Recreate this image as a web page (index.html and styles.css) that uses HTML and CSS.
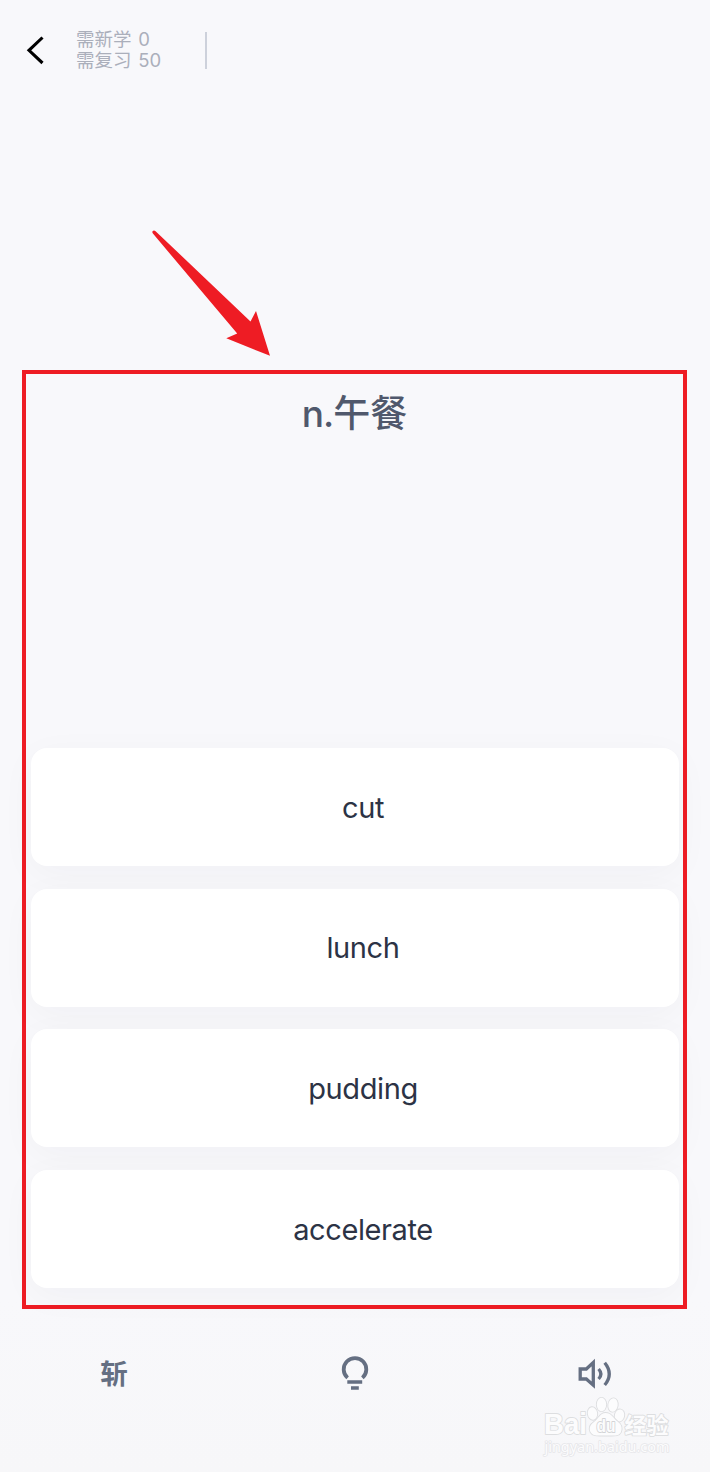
FILE: index.html
```html
<!DOCTYPE html>
<html lang="zh-CN">
<head>
<meta charset="utf-8">
<title>单词复习</title>
<link rel="stylesheet" href="styles.css">
</head>
<body>
<div class="screen">
  <header class="topbar">
    <svg class="back" width="20" height="32" viewBox="0 0 20 32"><path d="M16.5 3.5 L3 16.3 L16.5 29" fill="none" stroke="#000" stroke-width="3.1"/></svg>
    <div class="counts">
      <div>需新学 0</div>
      <div>需复习 50</div>
    </div>
    <div class="divider"></div>
  </header>
  <main class="quiz">
    <h1 class="meaning"><span class="pos">n.</span>午餐</h1>
    <div class="options">
      <div class="option">cut</div>
      <div class="option">lunch</div>
      <div class="option">pudding</div>
      <div class="option">accelerate</div>
    </div>
  </main>
  <nav class="tools">
    <div class="tool kill">斩</div>
    <div class="tool"><svg width="40" height="40" viewBox="0 0 40 40" fill="none" stroke="#656f82">
      <path d="M12.6 24.9 A11.3 11.3 0 1 1 27.4 24.9" stroke-width="3.8"/>
      <path d="M12.3 29H27.2M16 35H23.8" stroke-width="3.7"/></svg></div>
    <div class="tool"><svg width="40" height="40" viewBox="0 0 40 40" fill="none" stroke="#656f82" stroke-width="3.3">
      <path d="M5.2 16H11.3L18.3 9.6V32.2L11.3 26H5.2Z"/>
      <path d="M23.6 16 Q28.2 21 23.6 26M29.7 9.8 Q38.8 21 29.7 32"/></svg></div>
  </nav>
  <svg class="arrow" width="120" height="128" viewBox="0 0 120 128"><path d="M2.8 3 Q4 1.9 5.6 3.2 L100.5 93.4 L106 83 L120 127.8 L76.3 110.3 L87.2 105.4 L2.9 5.6 Q1.8 4 2.8 3Z" fill="#ee1c24"/></svg>
  <svg class="watermark" width="135" height="66" viewBox="0 0 135 66">
    <g fill="#fcfcfd" stroke="#dddee0" stroke-width="1.8" paint-order="stroke" stroke-linejoin="round">
      <text x="3" y="41" class="wm-main" textLength="43" lengthAdjust="spacingAndGlyphs">Bai</text>
      <ellipse cx="51.5" cy="20.5" rx="4.7" ry="6.3" transform="rotate(-8 51.5 20.5)"/>
      <ellipse cx="60.5" cy="11.5" rx="4.7" ry="6.7"/>
      <ellipse cx="72" cy="12" rx="4.7" ry="6.7" transform="rotate(8 72 12)"/>
      <ellipse cx="78.5" cy="22.5" rx="4.7" ry="6.1" transform="rotate(12 78.5 22.5)"/>
      <path d="M64.5 20 C59 20 57.5 26 53 29 C48.5 32 48 36 49.5 39 C52 43.5 57 42.5 64.5 42.5 C73 42.5 78 43.5 80 39 C81.5 35 80.5 31.5 76.5 28.5 C72 25 70.5 20 64.5 20Z"/>
      <text x="83.5" y="39.5" class="wm-cn">经验</text>
      <text x="3.5" y="58.5" class="wm-url" textLength="125" lengthAdjust="spacingAndGlyphs" stroke="#e6e6e9" stroke-width="1.5">jingyan.baidu.com</text>
      <text x="55.5" y="38.5" class="wm-du" textLength="19" lengthAdjust="spacingAndGlyphs" stroke="#d3d4d6">du</text>
    </g>
  </svg>
</div>
</body>
</html>
```
FILE: styles.css
```css
body {
  margin: 0;
  background: #f8f8fb;
  font-family: Inter, "Noto Sans CJK SC", sans-serif;
}
.screen {
  position: relative;
  height: 1472px;
  display: flex;
  flex-direction: column;
  overflow: hidden;
  background: linear-gradient(#f8f8fb 0, #f8f8fb 1300px, #f7f7f9 1472px);
}
.topbar {
  display: flex;
  align-items: center;
  height: 100px;
  padding-left: 26px;
  box-sizing: border-box;
}
.back { flex: none; }
.counts {
  width: 128px;
  margin-left: 30px;
  font-size: 18.5px;
  line-height: 21px;
  word-spacing: 1.5px;
  color: #abafbb;
  white-space: nowrap;
}
.divider {
  width: 2px;
  height: 37px;
  margin-left: 1px;
  background: #cdd1db;
}
.quiz {
  display: flex;
  flex-direction: column;
  justify-content: space-between;
  box-sizing: border-box;
  height: 939px;
  margin: 270px 23px 0 22px;
  padding: 13px 4px 17px 5px;
  border: 4px solid #ee1c24;
}
.meaning {
  margin: 0;
  padding-right: 1px;
  font-size: 37px;
  line-height: 54px;
  font-weight: 500;
  color: #50586c;
  text-align: center;
}
.pos { letter-spacing: -1px; }
.options {
  display: flex;
  flex-direction: column;
  gap: 22.6px;
}
.option {
  display: flex;
  align-items: center;
  justify-content: center;
  height: 118px;
  padding-left: 16px;
  border-radius: 16px;
  background: #fff;
  box-shadow: 0 8px 36px rgba(40, 40, 50, .035);
  font-size: 29px;
  letter-spacing: -.4px;
  color: #2c3345;
}
.tools {
  display: flex;
  justify-content: space-between;
  height: 128px;
  padding: 0 95px 0 94px;
}
.tool {
  width: 40px;
  height: 128px;
  display: flex;
  align-items: center;
  justify-content: center;
}
.kill {
  box-sizing: border-box;
  padding-bottom: 2px;
  font-family: "Noto Sans CJK SC", sans-serif;
  font-size: 27.5px;
  font-weight: 700;
  color: #656f82;
}
.arrow {
  position: absolute;
  left: 150px;
  top: 228px;
}
.watermark {
  position: absolute;
  left: 541px;
  top: 1393px;
}
.wm-main { font: 700 29px "Liberation Sans", sans-serif; }
.wm-cn { font: 700 22px "Noto Sans CJK SC", sans-serif; }
.wm-url { font: 400 13.5px "Noto Sans", sans-serif; }
.wm-du { font: 700 18px "Liberation Sans", sans-serif; }
```
